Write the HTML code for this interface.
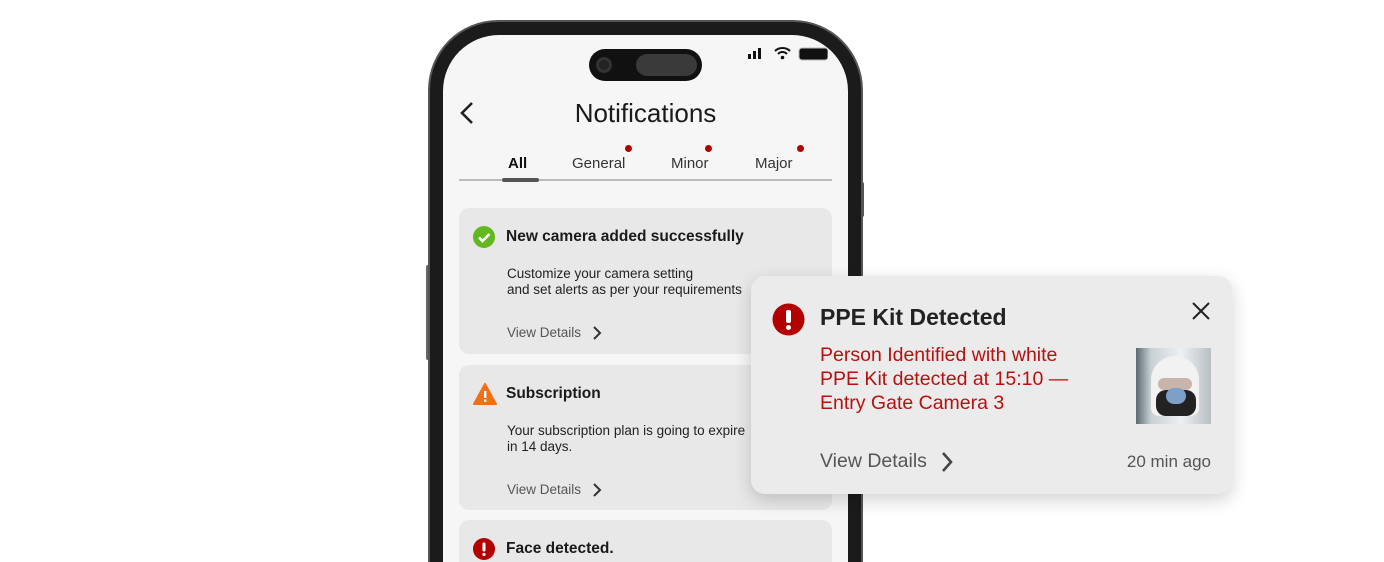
<!DOCTYPE html>
<html style="overflow:hidden"><head><style>
*{margin:0;padding:0;box-sizing:border-box}
body{width:1384px;height:562px;background:#fff;position:relative;overflow:hidden;font-family:"Liberation Sans",sans-serif;color:#1a1a1a}
.abs{position:absolute}
.frame{left:428px;top:20px;width:435px;height:542px;border-radius:70px 70px 0 0;background:#1b1b1b;border:2px solid #555;border-bottom:none}
.screen{left:443px;top:35px;width:405px;height:527px;border-radius:56px 56px 0 0;background:#f6f6f6;overflow:hidden}
.card{position:absolute;left:16px;width:373px;background:#e8e8e8;border-radius:10px}
.card .t{position:absolute;left:47px;top:20px;font-weight:bold;font-size:15.5px}
.card .ic{position:absolute;left:14px;top:18px}
.card .b{position:absolute;left:48px;top:58px;font-size:13.5px;line-height:16px;color:#222}
.card .v{position:absolute;left:48px;top:117px;font-size:13.5px;color:#555}
.card .v svg{position:absolute;left:84px;top:0}
.tab{position:absolute;top:120px;font-size:15px;color:#333}
.dot{position:absolute;width:7px;height:7px;border-radius:50%;background:#b00000}
</style></head><body>
<div class="abs" style="left:426px;top:265px;width:4px;height:95px;background:#666;border-radius:2px"></div>
<div class="abs" style="left:860px;top:182px;width:4px;height:35px;background:#555;border-radius:2px"></div>
<div class="abs frame"></div>
<div class="abs screen">
  <div class="abs" style="left:146px;top:14px;width:113px;height:32px;border-radius:16px;background:#111"></div>
  <div class="abs" style="left:153px;top:22px;width:16px;height:16px;border-radius:50%;background:#222;border:3px solid #333"></div>
  <div class="abs" style="left:193px;top:19px;width:61px;height:22px;border-radius:11px;background:#3a3a3a"></div>
  <svg class="abs" style="left:305px;top:12px" width="80" height="14">
    <rect x="0" y="7" width="3" height="5" fill="#111"/><rect x="5" y="4" width="3" height="8" fill="#111"/><rect x="10" y="1" width="3" height="11" fill="#111"/>
    <path d="M27 4a11 11 0 0 1 15 0M30 7a6 6 0 0 1 9 0" stroke="#111" stroke-width="2" fill="none"/><circle cx="34.5" cy="10.5" r="1.8" fill="#111"/>
    <rect x="51" y="1" width="29" height="12" rx="3" fill="#111" stroke="#bbb"/>
  </svg>
  <svg class="abs" style="left:15px;top:65px" width="20" height="28"><path d="M14 3L4 13l10 10" stroke="#222" stroke-width="2.6" fill="none"/></svg>
  <div class="abs" style="left:0;width:405px;top:63px;text-align:center;font-size:26px;color:#1a1a1a">Notifications</div>
  <div class="tab" style="left:65px;font-weight:bold;color:#111">All</div>
  <div class="tab" style="left:129px">General</div><div class="dot" style="left:182px;top:110px"></div>
  <div class="tab" style="left:228px">Minor</div><div class="dot" style="left:262px;top:110px"></div>
  <div class="tab" style="left:312px">Major</div><div class="dot" style="left:354px;top:110px"></div>
  <div class="abs" style="left:16px;top:144px;width:373px;height:2px;background:#bbb"></div>
  <div class="abs" style="left:59px;top:143px;width:37px;height:4px;border-radius:2px;background:#555"></div>

  <div class="card" style="top:173px;height:146px">
    <svg class="ic" width="22" height="22"><circle cx="11" cy="11" r="11" fill="#62b81e"/><path d="M6 11.5l3.5 3.5 7-7" stroke="#fff" stroke-width="2.6" fill="none"/></svg>
    <div class="t">New camera added successfully</div>
    <div class="b">Customize your camera setting<br>and set alerts as per your requirements</div>
    <div class="v">View Details<svg width="12" height="16"><path d="M3 2l6 6-6 6" stroke="#333" stroke-width="2" fill="none"/></svg></div>
  </div>
  <div class="card" style="top:330px;height:145px">
    <svg class="ic" width="24" height="22"><path d="M12 1L23 21H1z" fill="#f07018" stroke="#f07018" stroke-linejoin="round" stroke-width="2"/><rect x="11" y="8" width="2.4" height="7" fill="#fff"/><rect x="11" y="16.5" width="2.4" height="2.4" fill="#fff"/></svg>
    <div class="t">Subscription</div>
    <div class="b">Your subscription plan is going to expire<br>in 14 days.</div>
    <div class="v">View Details<svg width="12" height="16"><path d="M3 2l6 6-6 6" stroke="#333" stroke-width="2" fill="none"/></svg></div>
  </div>
  <div class="card" style="top:485px;height:42px;border-radius:10px 10px 0 0">
    <svg class="ic" width="22" height="22"><circle cx="11" cy="11" r="11" fill="#b30000"/><rect x="9.5" y="4.5" width="3" height="9" rx="1.2" fill="#fff"/><circle cx="11" cy="16.5" r="1.6" fill="#fff"/></svg>
    <div class="t">Face detected.</div>
  </div>
</div>

<div class="abs" style="left:751px;top:276px;width:481px;height:218px;border-radius:14px;background:#ebebeb;box-shadow:0 6px 18px rgba(0,0,0,0.18)">
  <svg class="abs" style="left:21px;top:27px" width="33" height="33"><circle cx="16.5" cy="16.5" r="16" fill="#b30000"/><rect x="14" y="7" width="5" height="13" rx="2" fill="#fff"/><circle cx="16.5" cy="24.5" r="2.5" fill="#fff"/></svg>
  <div class="abs" style="left:69px;top:28px;font-size:23px;font-weight:bold;color:#222">PPE Kit Detected</div>
  <svg class="abs" style="left:440px;top:25px" width="20" height="20"><path d="M2 2l16 16M18 2L2 18" stroke="#222" stroke-width="2"/></svg>
  <div class="abs" style="left:69px;top:67px;font-size:19.5px;line-height:24px;color:#b80f0f">Person Identified with white<br>PPE Kit detected at 15:10 —<br>Entry Gate Camera 3</div>
  <div class="abs" style="left:385px;top:72px;width:75px;height:76px;overflow:hidden;background:linear-gradient(90deg,#5a6a70 0,#c8d0d4 20%,#eef0f2 60%,#b8c0c4 100%)">
    <div class="abs" style="left:15px;top:8px;width:48px;height:60px;border-radius:24px 24px 8px 8px;background:#f2f2f2"></div>
    <div class="abs" style="left:22px;top:30px;width:34px;height:12px;border-radius:6px;background:#c8b4a8"></div>
    <div class="abs" style="left:20px;top:42px;width:40px;height:26px;border-radius:10px;background:#222"></div>
    <div class="abs" style="left:30px;top:40px;width:20px;height:16px;border-radius:8px;background:#7ea0c8"></div>
  </div>
  <div class="abs" style="left:69px;top:174px;font-size:19.5px;color:#555">View Details</div>
  <svg class="abs" style="left:188px;top:175px" width="16" height="22"><path d="M4 2l8 9-8 9" stroke="#444" stroke-width="2.6" fill="none"/></svg>
  <div class="abs" style="right:21px;top:176px;font-size:17px;color:#555">20 min ago</div>
</div>
</body></html>
